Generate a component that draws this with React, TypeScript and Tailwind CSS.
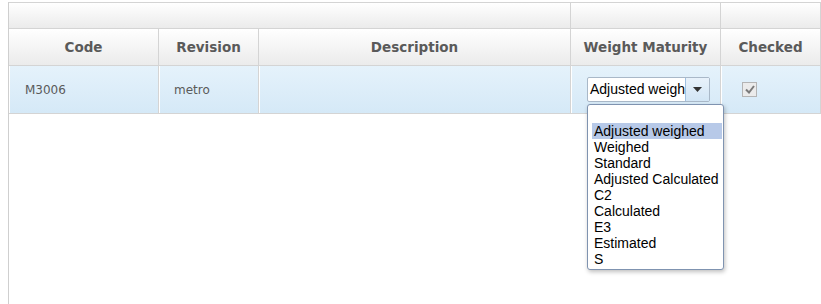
import React from 'react';

const options = [
  'Adjusted weighed',
  'Weighed',
  'Standard',
  'Adjusted Calculated',
  'C2',
  'Calculated',
  'E3',
  'Estimated',
  'S',
];

const headCell =
  'border-r border-[#d4d4d4] bg-gradient-to-b from-[#ffffff] to-[#ebebeb] text-center font-bold text-[13.5px] text-[#5a5a5a]';
const rowCell =
  'border-r border-[#d4d4d4] bg-gradient-to-b from-[#e5f2fb] to-[#d5e9f7] shadow-[inset_1px_0_0_#ffffff]';

export default function App() {
  return (
    <div className="w-[821px] h-[304px] bg-white pt-[2px] pl-[8px] overflow-hidden font-['DejaVu_Sans',Verdana,sans-serif]">
      <div className="relative w-[813px] h-[302px] border-l border-[#cfcfcf]">
        {/* group header row */}
        <div className="flex h-[27px] border-t border-b border-[#d4d4d4]">
          <div className={`${headCell} w-[562px]`} />
          <div className={`${headCell} w-[150px]`} />
          <div className={`${headCell} w-[100px]`} />
        </div>

        {/* column header row */}
        <div className="flex h-[37px] border-b border-[#d4d4d4]">
          <div className={`${headCell} w-[150px] flex items-center justify-center pt-[1px]`}>Code</div>
          <div className={`${headCell} w-[100px] flex items-center justify-center pt-[1px]`}>Revision</div>
          <div className={`${headCell} w-[312px] flex items-center justify-center pt-[1px]`}>Description</div>
          <div className={`${headCell} w-[150px] flex items-center justify-center pt-[1px]`}>Weight Maturity</div>
          <div className={`${headCell} w-[100px] flex items-center justify-center pt-[1px]`}>Checked</div>
        </div>

        {/* data row */}
        <div className="flex h-[48px] border-b border-[#d4d4d4] text-[12px] text-[#5a5a5a]">
          <div className={`${rowCell} w-[150px] flex items-center pl-[16px]`}>M3006</div>
          <div className={`${rowCell} w-[100px] flex items-center pl-[15px]`}>metro</div>
          <div className={`${rowCell} w-[312px]`} />
          <div className={`${rowCell} w-[150px] flex items-center pl-[16px]`}>
            <div className="flex h-[25px] w-[123px] border border-[#a9b8c8] bg-white rounded-[2px] font-['Liberation_Sans',Arial,sans-serif] text-[14px] text-black">
              <div className="w-[97px] overflow-hidden whitespace-nowrap pl-[2px] leading-[23px]">Adjusted weigh</div>
              <div className="flex-1 flex items-center justify-center border-l border-[#9fc0e0] bg-gradient-to-b from-[#e8f2fb] to-[#d2e5f5]">
                <svg width="9" height="5" viewBox="0 0 9 5">
                  <path d="M0 0 H9 L4.5 5 Z" fill="#333" />
                </svg>
              </div>
            </div>
          </div>
          <div className={`${rowCell} w-[100px] flex items-center pl-[21px]`}>
            <div className="w-[15px] h-[15px] border border-[#b4b4b4] bg-[#ebebeb] flex items-center justify-center">
              <svg width="10" height="9" viewBox="0 0 10 9">
                <path d="M1 4.5 L4 7.5 L9 1" stroke="#7a7a7a" strokeWidth="2" fill="none" />
              </svg>
            </div>
          </div>
        </div>

        {/* open dropdown list */}
        <div className="absolute left-[578px] top-[102px] w-[137px] h-[166px] bg-white border border-[#7f93b0] rounded-[3px] shadow-[1px_2px_4px_rgba(0,0,0,0.25)] pt-[18px] pl-[4px] pr-[1px] font-['Liberation_Sans',Arial,sans-serif] text-[14px] text-black leading-[16px]">
          {options.map((o, i) => (
            <div key={o} className={`pl-[2px] whitespace-nowrap ${i === 0 ? 'bg-[#b7c9e8]' : ''}`}>
              {o}
            </div>
          ))}
        </div>
      </div>
    </div>
  );
}
